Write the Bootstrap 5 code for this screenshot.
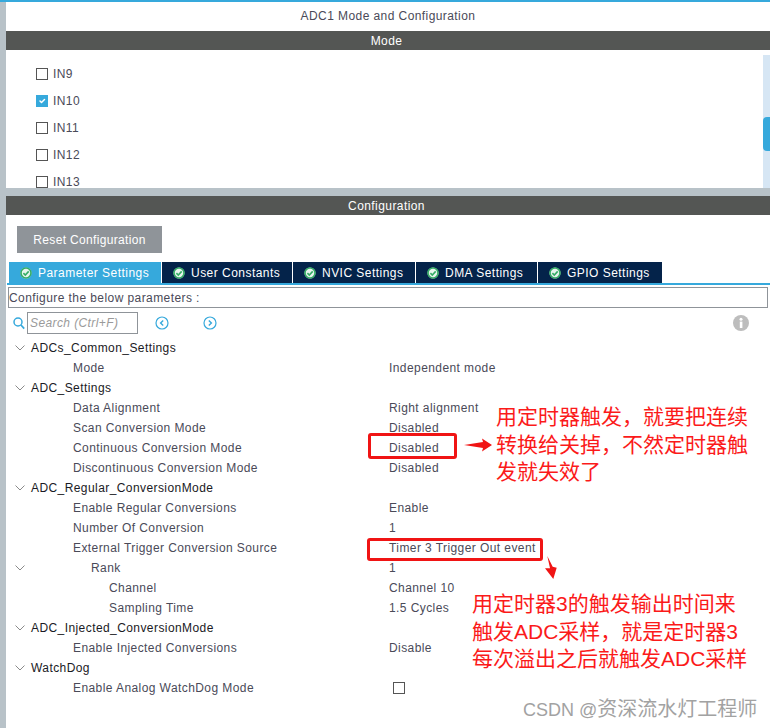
<!DOCTYPE html>
<html lang="zh">
  <head>
    <meta charset="UTF-8" />
    <title>ADC1 Mode and Configuration</title>
    <link
      href="https://cdn.jsdelivr.net/npm/bootstrap@5.3.0/dist/css/bootstrap.min.css"
      rel="stylesheet"
    />
    <style>
      body {
        background: #b8c2c8;
        font-family: "Liberation Sans", "Noto Sans CJK SC", sans-serif;
        font-size: 12px;
        letter-spacing: 0.42px;
        color: #4a4a58;
        line-height: 20px;
      }
      .page-wrap {
        position: relative;
        width: 770px;
        height: 728px;
        overflow: hidden;
        border-top: 2px solid #36a9dc;
      }
      .side-wrap { margin-left: 6px; }
      .main-title { height: 29px; line-height: 29px; }
      .sect-head {
        height: 19px;
        line-height: 20px;
        background: #545654;
        color: #fff;
        text-align: center;
        padding-right: 3px;
      }
      .mode-box { height: 138px; overflow: hidden; padding: 10px 0 0 30px; }
      .mode-row { height: 27px; gap: 5px; }
      .form-check-input.chk {
        width: 12px;
        height: 12px;
        margin: 0;
        border: 1px solid #555;
        border-radius: 0;
        flex: none;
      }
      .form-check-input.chk:checked { background-color: #36a9dc; border-color: #36a9dc; }
      .scroll-track {
        position: absolute;
        left: 763px;
        top: 53px;
        width: 7px;
        height: 133px;
        background: #d6e6f4;
      }
      .scroll-thumb {
        position: absolute;
        left: 0;
        top: 62px;
        width: 7px;
        height: 34px;
        background: #36a9dc;
        border-radius: 4px 0 0 4px;
      }
      .sect-gap { height: 8px; }
      .conf-box { background: #fff; height: 513px; padding-top: 11px; }
      .reset-btn {
        display: block;
        width: 145px;
        height: 27px;
        margin-left: 11px;
        padding: 0;
        background: #8f9499;
        border: 0;
        border-radius: 0;
        color: #fff;
        font-size: 12px;
        letter-spacing: 0.33px;
      }
      .tab-strip {
        margin: 9px 0 0 1px;
        border-bottom: 2px solid #36a9dc;
        flex-wrap: nowrap;
        gap: 1px;
        --bs-nav-tabs-border-width: 0;
        padding-left: 2px;
      }
      .tab-strip .nav-link {
        height: 21px;
        display: flex;
        align-items: center;
        gap: 6px;
        padding: 0 0 0 11px;
        border: 0;
        border-radius: 0;
        margin: 0;
        background: #04234a;
        color: #fff;
        font-size: 12px;
        letter-spacing: 0.47px;
      }
      .tab-strip .nav-link.active { background: #36a9dc; color: #fff; }
      .cfg-note {
        margin: 2px 2px 0 2px;
        height: 21px;
        line-height: 20px;
        border: 1px solid #8f9499;
      }
      .search-row { position: relative; height: 22px; margin-top: 4px; }
      .search-row svg { position: absolute; }
      .search-input.form-control {
        position: absolute;
        left: 21px;
        top: 0;
        width: 111px;
        height: 22px;
        padding: 0 2px;
        border: 1px solid #8f9499;
        border-radius: 0;
        font-size: 12px;
        font-style: italic;
        letter-spacing: 0.4px;
      }
      .search-input.form-control::placeholder { color: #9a9a9a; }
      .tree-box { margin-top: 4px; }
      .tree-row { height: 20px; display: flex; align-items: center; }
      .tree-name { width: 383px; flex: none; white-space: nowrap; }
      .tree-val { display: flex; align-items: center; }
      .lvl-0 { padding-left: 25px; color: #1a1a24; position: relative; }
      .lvl-1 { padding-left: 67px; }
      .lvl-2 { padding-left: 85px; }
      .lvl-3 { padding-left: 103px; }
      .lvl-0 svg { position: absolute; left: 9px; top: 7px; }
      .red-frame {
        position: absolute;
        border: 3px solid #f01414;
        border-radius: 3px;
      }
      .red-note {
        position: absolute;
        color: #fb1a1a;
        font-size: 21px;
        line-height: 27.5px;
        letter-spacing: 0;
        white-space: nowrap;
      }
      .wmark {
        position: absolute;
        left: 523px;
        top: 695px;
        font-size: 20px;
        line-height: 24px;
        letter-spacing: 0;
        color: #a2a2a2;
        white-space: nowrap;
      }
      .wmark-latin { font-size: 18px; }
      .mark-arrow { position: absolute; }
    </style>
  </head>
  <body>
    <div class="page-wrap">
      <div class="side-wrap">
        <div class="main-title text-center bg-white">ADC1 Mode and Configuration</div>
        <div class="sect-head">Mode</div>
        <div class="mode-box bg-white">
          <div class="mode-row d-flex align-items-center"><input class="form-check-input chk" type="checkbox" /><span>IN9</span></div>
          <div class="mode-row d-flex align-items-center"><input class="form-check-input chk" type="checkbox" checked /><span>IN10</span></div>
          <div class="mode-row d-flex align-items-center"><input class="form-check-input chk" type="checkbox" /><span>IN11</span></div>
          <div class="mode-row d-flex align-items-center"><input class="form-check-input chk" type="checkbox" /><span>IN12</span></div>
          <div class="mode-row d-flex align-items-center"><input class="form-check-input chk" type="checkbox" /><span>IN13</span></div>
        </div>
        <div class="sect-gap"></div>
        <div class="sect-head">Configuration</div>
        <div class="conf-box">
          <button class="btn reset-btn" type="button">Reset Configuration</button>
          <ul class="nav nav-tabs tab-strip">
            <li class="nav-item"><a class="nav-link active" style="width: 152px" href="#"><svg width="12" height="12" viewBox="0 0 12 12"><circle cx="6" cy="6" r="5.5" fill="#e8f5ee"/><circle cx="6" cy="6" r="5" fill="none" stroke="#35ad66" stroke-width="1.6"/><path d="M3.4 6.1 5.3 8 8.7 4.4" fill="none" stroke="#35ad66" stroke-width="1.6"/></svg>Parameter Settings</a></li>
            <li class="nav-item"><a class="nav-link" style="width: 130px" href="#"><svg width="12" height="12" viewBox="0 0 12 12"><circle cx="6" cy="6" r="5.5" fill="#e8f5ee"/><circle cx="6" cy="6" r="5" fill="none" stroke="#35ad66" stroke-width="1.6"/><path d="M3.4 6.1 5.3 8 8.7 4.4" fill="none" stroke="#35ad66" stroke-width="1.6"/></svg>User Constants</a></li>
            <li class="nav-item"><a class="nav-link" style="width: 122px" href="#"><svg width="12" height="12" viewBox="0 0 12 12"><circle cx="6" cy="6" r="5.5" fill="#e8f5ee"/><circle cx="6" cy="6" r="5" fill="none" stroke="#35ad66" stroke-width="1.6"/><path d="M3.4 6.1 5.3 8 8.7 4.4" fill="none" stroke="#35ad66" stroke-width="1.6"/></svg>NVIC Settings</a></li>
            <li class="nav-item"><a class="nav-link" style="width: 121px" href="#"><svg width="12" height="12" viewBox="0 0 12 12"><circle cx="6" cy="6" r="5.5" fill="#e8f5ee"/><circle cx="6" cy="6" r="5" fill="none" stroke="#35ad66" stroke-width="1.6"/><path d="M3.4 6.1 5.3 8 8.7 4.4" fill="none" stroke="#35ad66" stroke-width="1.6"/></svg>DMA Settings</a></li>
            <li class="nav-item"><a class="nav-link" style="width: 124px" href="#"><svg width="12" height="12" viewBox="0 0 12 12"><circle cx="6" cy="6" r="5.5" fill="#e8f5ee"/><circle cx="6" cy="6" r="5" fill="none" stroke="#35ad66" stroke-width="1.6"/><path d="M3.4 6.1 5.3 8 8.7 4.4" fill="none" stroke="#35ad66" stroke-width="1.6"/></svg>GPIO Settings</a></li>
          </ul>
          <div class="cfg-note">Configure the below parameters :</div>
          <div class="search-row">
            <svg style="left: 7px; top: 5px" width="12" height="13" viewBox="0 0 12 13"><circle cx="5" cy="5" r="4" fill="none" stroke="#36a9dc" stroke-width="1.5"/><path d="M8 8l3.2 3.6" stroke="#36a9dc" stroke-width="1.7"/></svg>
            <input class="form-control search-input" type="text" placeholder="Search (Ctrl+F)" />
            <svg style="left: 149px; top: 4px" width="14" height="14" viewBox="0 0 14 14"><circle cx="7" cy="7" r="6" fill="none" stroke="#36a9dc" stroke-width="1.2"/><path d="M8.2 4.4 5.6 7l2.6 2.6" fill="none" stroke="#36a9dc" stroke-width="1.4"/></svg>
            <svg style="left: 197px; top: 4px" width="14" height="14" viewBox="0 0 14 14"><circle cx="7" cy="7" r="6" fill="none" stroke="#36a9dc" stroke-width="1.2"/><path d="M5.8 4.4 8.4 7l-2.6 2.6" fill="none" stroke="#36a9dc" stroke-width="1.4"/></svg>
            <svg style="left: 727px; top: 3px" width="16" height="16" viewBox="0 0 16 16"><circle cx="8" cy="8" r="8" fill="#bdbdbd"/><rect x="6.8" y="6.6" width="2.6" height="6.4" fill="#fff"/><circle cx="8" cy="4.2" r="1.5" fill="#fff"/></svg>
          </div>
          <div class="tree-box" id="tree"></div>
        </div>
      </div>
      <div class="scroll-track"><div class="scroll-thumb"></div></div>

      <div class="red-frame" style="left: 368px; top: 431px; width: 89px; height: 26px"></div>
      <svg class="mark-arrow" style="left: 463px; top: 435px" width="30" height="16" viewBox="0 0 30 16"><path d="M1 8 20 5 19 1.5 29 8 19 14.5 20 11z" fill="#f01414"/></svg>
      <div class="red-note" style="left: 496px; top: 401px">用定时器触发，就要把连续<br />转换给关掉，不然定时器触<br />发就失效了</div>

      <div class="red-frame" style="left: 367px; top: 536px; width: 176px; height: 23px"></div>
      <svg class="mark-arrow" style="left: 545px; top: 554px" width="13" height="26" viewBox="0 0 13 26"><path d="M2.3 0 5 12.3 0 12.3 8.3 23 11.7 11.7 7.7 10.7z" fill="#f01414"/></svg>
      <div class="red-note" style="left: 472px; top: 588px">用定时器3的触发输出时间来<br />触发ADC采样，就是定时器3<br />每次溢出之后就触发ADC采样</div>

      <div class="wmark"><span class="wmark-latin">CSDN @</span>资深流水灯工程师</div>
    </div>

    <script src="https://cdn.jsdelivr.net/npm/bootstrap@5.3.0/dist/js/bootstrap.bundle.min.js"></script>
    <script>
      const rows = [
        [0, "ADCs_Common_Settings"],
        [1, "Mode", "Independent mode"],
        [0, "ADC_Settings"],
        [1, "Data Alignment", "Right alignment"],
        [1, "Scan Conversion Mode", "Disabled"],
        [1, "Continuous Conversion Mode", "Disabled"],
        [1, "Discontinuous Conversion Mode", "Disabled"],
        [0, "ADC_Regular_ConversionMode"],
        [1, "Enable Regular Conversions", "Enable"],
        [1, "Number Of Conversion", "1"],
        [1, "External Trigger Conversion Source", "Timer 3 Trigger Out event"],
        [2, "Rank", "1", true],
        [3, "Channel", "Channel 10"],
        [3, "Sampling Time", "1.5 Cycles"],
        [0, "ADC_Injected_ConversionMode"],
        [1, "Enable Injected Conversions", "Disable"],
        [0, "WatchDog"],
        [1, "Enable Analog WatchDog Mode", "chk"],
      ];
      const chevron = (x) =>
        `<svg style="left:${x}px" width="10" height="6" viewBox="0 0 10 6"><path d="M.5.5 5 5 9.5.5" fill="none" stroke="#8a8a8a"/></svg>`;
      document.getElementById("tree").innerHTML = rows
        .map((r) => {
          let val = r[2] || "";
          if (val === "chk") val = '<input class="form-check-input chk ms-1" type="checkbox" />';
          const arrow = r[0] === 0 ? chevron(9) : r[3] ? chevron(9) : "";
          const cls = r[0] === 2 ? "lvl-2 lvl-0 text-reset" : "lvl-" + r[0];
          return `<div class="tree-row"><div class="tree-name ${cls}">${arrow}${r[1]}</div><div class="tree-val">${val}</div></div>`;
        })
        .join("");
    </script>
  </body>
</html>
